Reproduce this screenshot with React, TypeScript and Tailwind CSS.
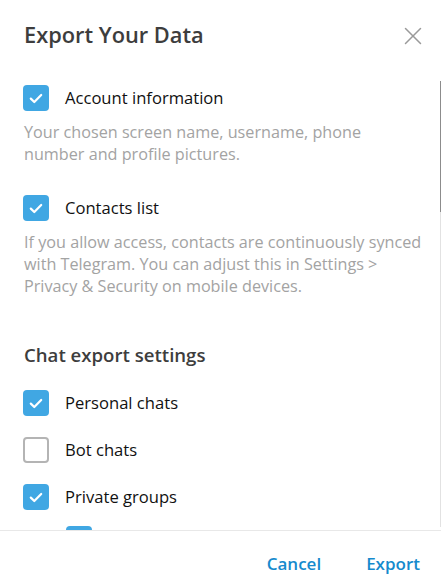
import { X } from 'lucide-react';

interface CheckRowProps {
  label: string;
  checked: boolean;
}

const CheckBox = ({ checked }: { checked: boolean }) =>
  checked ? (
    <div className="w-[26px] h-[26px] rounded-[4px] bg-[#40a7e3] flex items-center justify-center flex-shrink-0">
      <svg width="14" height="11" viewBox="0 0 14 11" fill="none">
        <path d="M1.8 5.6 L5.3 9 L12.2 2" stroke="white" strokeWidth="2.2" strokeLinecap="round" strokeLinejoin="round" />
      </svg>
    </div>
  ) : (
    <div className="w-[26px] h-[26px] rounded-[4px] border-2 border-[#b4b4b4] flex-shrink-0" />
  );

const CheckRow = ({ label, checked }: CheckRowProps) => (
  <div className="flex items-center gap-4 h-[26px]">
    <CheckBox checked={checked} />
    <span className="text-[16.6px] text-[#111111] whitespace-nowrap">{label}</span>
  </div>
);

export default function App() {
  return (
    <div
      className="w-[441px] h-[583px] bg-white flex flex-col overflow-hidden"
      style={{ fontFamily: '"Open Sans", "Liberation Sans", sans-serif' }}
    >
      <div className="h-[71px] flex items-center justify-between pl-6 pr-[13px] flex-shrink-0">
        <h1 className="text-[21.8px] font-semibold text-[#3d3d3d]">Export Your Data</h1>
        <X size={30} strokeWidth={1.2} className="text-[#9a9a9a]" />
      </div>

      <div className="flex-1 flex min-h-0">
        <div className="flex-1 overflow-hidden pl-[23px] pr-4 pt-[14px]">
          <CheckRow label="Account information" checked />
          <p className="mt-[10px] text-[16.2px] leading-[22px] text-[#a3a3a3] pl-px">
            Your chosen screen name, username, phone number and profile pictures.
          </p>

          <div className="mt-[30px]">
            <CheckRow label="Contacts list" checked />
          </div>
          <p className="mt-[10px] text-[16.2px] leading-[22px] text-[#a3a3a3] pl-px">
            If you allow access, contacts are continuously synced with Telegram. You can adjust this in Settings &gt; Privacy &amp; Security on mobile devices.
          </p>

          <h2 className="mt-[46px] text-[18.6px] leading-[24px] font-semibold text-[#3d3d3d] pl-px">
            Chat export settings
          </h2>

          <div className="mt-[23px] flex flex-col gap-[21px]">
            <CheckRow label="Personal chats" checked />
            <CheckRow label="Bot chats" checked={false} />
            <CheckRow label="Private groups" checked />
          </div>
          <div className="mt-[16px] pl-[43px]">
            <CheckRow label="Only my messages" checked />
          </div>
        </div>

        <div className="w-[2px] flex flex-col pt-[10px] pb-[3px] flex-shrink-0">
          <div className="h-[131px] w-[1px] ml-auto bg-[#8c8c8c]" />
          <div className="flex-1 w-[1px] ml-auto bg-[#e2e2e2]" />
        </div>
      </div>

      <div className="h-[53px] border-t border-[#e8e8e8] flex items-center justify-end gap-[45px] pr-[21px] pt-[14px] flex-shrink-0">
        <button className="text-[17px] font-semibold text-[#168acd]">Cancel</button>
        <button className="text-[17px] font-semibold text-[#168acd]">Export</button>
      </div>
    </div>
  );
}
